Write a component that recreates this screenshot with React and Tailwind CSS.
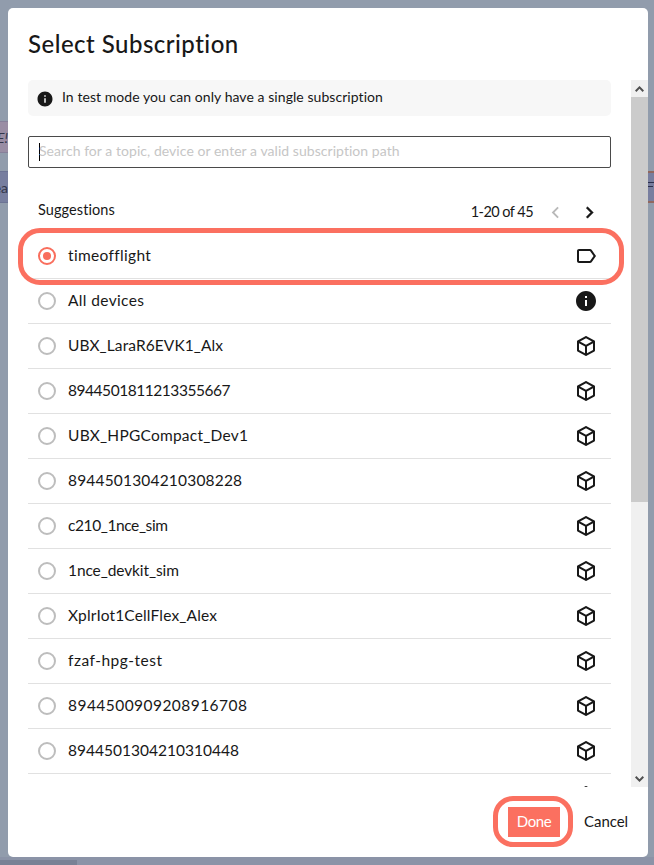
const CUBE =
  'M21 16.5c0 .38-.21.71-.53.88l-7.9 4.44c-.16.12-.36.18-.57.18s-.41-.06-.57-.18l-7.9-4.44A.99.99 0 0 1 3 16.5v-9c0-.38.21-.71.53-.88l7.9-4.44c.16-.12.36-.18.57-.18s.41.06.57.18l7.9 4.44c.32.17.53.5.53.88v9M12 4.15 6.04 7.5 12 10.85l5.96-3.35L12 4.15M5 15.91l6 3.38v-6.71L5 9.21v6.7m14 0v-6.7l-6 3.37v6.71l6-3.38Z';
const INFO =
  'M12 2C6.48 2 2 6.48 2 12s4.48 10 10 10 10-4.48 10-10S17.52 2 12 2zm1 15h-2v-6h2v6zm0-8h-2V7h2v2z';
const LABEL =
  'M17.63 5.84C17.27 5.33 16.67 5 16 5L5 5.01C3.9 5.01 3 5.9 3 7v10c0 1.1.9 1.99 2 1.99L16 19c.67 0 1.27-.33 1.63-.84L22 12l-4.37-6.16zM16 17H5V7h11l3.55 5L16 17z';
const PREV = 'M15.41 7.41 14 6l-6 6 6 6 1.41-1.41L10.83 12z';
const NEXT = 'M10 6 8.59 7.41 13.17 12l-4.58 4.59L10 18l6-6z';

const ROWS = [
  { name: 'timeofflight', icon: LABEL, spacing: 'tracking-[0.33px]', selected: true },
  { name: 'All devices', icon: INFO, spacing: 'tracking-[0.37px]' },
  { name: 'UBX_LaraR6EVK1_Alx', icon: CUBE, spacing: 'tracking-[0.09px]' },
  { name: '8944501811213355667', icon: CUBE, spacing: 'tracking-[-0.46px]' },
  { name: 'UBX_HPGCompact_Dev1', icon: CUBE, spacing: 'tracking-[0.23px]' },
  { name: '8944501304210308228', icon: CUBE, spacing: 'tracking-[0.18px]' },
  { name: 'c210_1nce_sim', icon: CUBE, spacing: 'tracking-[-0.41px]' },
  { name: '1nce_devkit_sim', icon: CUBE, spacing: 'tracking-[-0.1px]' },
  { name: 'XplrIot1CellFlex_Alex', icon: CUBE, spacing: 'tracking-[0.16px]' },
  { name: 'fzaf-hpg-test', icon: CUBE, spacing: 'tracking-[0.49px]' },
  { name: '8944500909208916708', icon: CUBE, spacing: 'tracking-[0.45px]' },
  { name: '8944501304210310448', icon: CUBE, spacing: 'tracking-[0.01px]' },
  { name: '', icon: CUBE, spacing: '' },
];

function Icon({ d, className }) {
  return (
    <svg viewBox="0 0 24 24" fill="currentColor" className={`shrink-0 ${className}`}>
      <path d={d} />
    </svg>
  );
}

function Row({ name, icon, spacing, selected }) {
  return (
    <li className="flex h-[45px] shrink-0 items-center border-b border-[#e1e1e1] pr-[13px] pl-[10px]">
      <span
        className={`flex size-[18px] shrink-0 items-center justify-center rounded-full border-2 ${
          selected ? 'border-[#f96e5d]' : 'border-[#bdbdbd]'
        }`}
      >
        {selected && <span className="size-2 rounded-full bg-[#f96e5d]" />}
      </span>
      <span className={`ml-3 flex-1 text-[15.5px] whitespace-nowrap ${spacing}`}>{name}</span>
      <Icon d={icon} className="size-6" />
    </li>
  );
}

function Scrollbar() {
  return (
    <div className="flex w-[17px] shrink-0 flex-col bg-[#f0f0f0] text-[#505050]">
      <div className="flex h-[17px] items-center justify-center">
        <svg width="9" height="6" viewBox="0 0 9 6" fill="none" stroke="currentColor" strokeWidth="2">
          <path d="M.7 5.2 4.5 1.4 8.3 5.2" />
        </svg>
      </div>
      <div className="h-[405px] bg-[#cbcbcb]" />
      <div className="flex-1" />
      <div className="flex h-[17px] items-center justify-center">
        <svg width="9" height="6" viewBox="0 0 9 6" fill="none" stroke="currentColor" strokeWidth="2">
          <path d="M.7.8 4.5 4.6 8.3.8" />
        </svg>
      </div>
    </div>
  );
}

function Backdrop() {
  return (
    <>
      <div className="absolute top-[121px] left-0 flex h-[32px] w-2 items-center justify-end border-y border-[#87809a] bg-[#9a8da4]">
        <span className="text-[14px] text-[#33364a] italic">E!</span>
      </div>
      <div className="absolute top-[171px] left-0 flex h-[32px] w-2 items-center justify-end border-y border-[#6c7394] bg-[#777e9f]">
        <span className="text-[14px] text-[#33364a]">ea</span>
      </div>
      <div className="absolute top-[171px] right-0 flex h-[32px] w-3 justify-end overflow-hidden border-y-2 border-[#90675f] bg-[#787e9f] pt-2">
        <span className="mt-px flex w-[6px] flex-col gap-[3px]">
          <span className="h-px w-full bg-[#2b2f4a]" />
          <span className="h-px w-[5px] bg-[#2b2f4a]" />
        </span>
      </div>
      <div className="absolute bottom-0 left-0 h-2 w-full bg-[#8b93a7]" />
      <div className="absolute bottom-0 left-0 h-[5px] w-[77px] bg-[#798195]" />
    </>
  );
}

export default function App() {
  return (
    <div className="relative h-[865px] w-[654px] overflow-hidden bg-[#919cac] p-2 pr-[6px] font-['Lato','Open_Sans',sans-serif] text-[#181818]">
      <Backdrop />
      <main className="relative flex h-[849px] w-[640px] flex-col rounded-[5px] bg-white">
        <h1 className="h-[72px] shrink-0 pt-[17px] pl-5 text-[24px] leading-[38px] font-medium tracking-[0.48px]">
          Select Subscription
        </h1>

        <div className="flex h-[707px] shrink-0 overflow-hidden">
          <div className="mr-5 ml-5 flex w-[583px] shrink-0 flex-col">
            <div className="flex h-9 shrink-0 items-center rounded-[5px] bg-[#f7f7f7] pl-2">
              <Icon d={INFO} className="mt-[2px] size-[18px]" />
              <p className="mb-[3px] ml-2 text-[14px] tracking-[0.06px]">
                In test mode you can only have a single subscription
              </p>
            </div>

            <div className="mt-5 flex h-8 shrink-0 items-center rounded-[2px] border border-[#4a4a4a] pl-[10px]">
              <span className="h-[18px] w-px bg-black" />
              <span className="mb-[3px] -ml-px text-[14px] tracking-[0.05px] text-[#c6c6c6]">
                Search for a topic, device or enter a valid subscription path
              </span>
            </div>

            <div className="flex h-[66px] shrink-0 items-center pt-[22px] pl-[10px]">
              <span className="-mt-1 flex-1 text-[14.5px] tracking-[0.08px]">Suggestions</span>
              <span className="-mt-px text-[14.5px] tracking-[-0.55px]">1-20 of 45</span>
              <Icon d={PREV} className="ml-[11px] size-[23px] text-[#b9b9b9]" />
              <Icon d={NEXT} className="mr-[10px] ml-[11px] size-[23px] stroke-current stroke-[0.5]" />
            </div>

            <ul className="flex flex-col">
              {ROWS.map((row, i) => (
                <Row key={i} {...row} />
              ))}
            </ul>
          </div>
          <Scrollbar />
        </div>

        <footer className="flex flex-1 items-center justify-end pr-5 text-[15px]">
          <button className="h-[30px] w-[52px] bg-[#fb7060] pb-[2px] text-center text-[15px] tracking-[-0.4px] text-white">
            Done
          </button>
          <button className="ml-6 pb-[2px] tracking-[-0.07px]">Cancel</button>
        </footer>
      </main>

      <div className="absolute top-[228px] left-[18px] h-[57px] w-[606px] rounded-[22px] border-[5px] border-[#fb7060]" />
      <div className="absolute top-[796px] left-[493px] h-[51px] w-[80px] rounded-[20px] border-[5px] border-[#fb7060]" />
    </div>
  );
}
